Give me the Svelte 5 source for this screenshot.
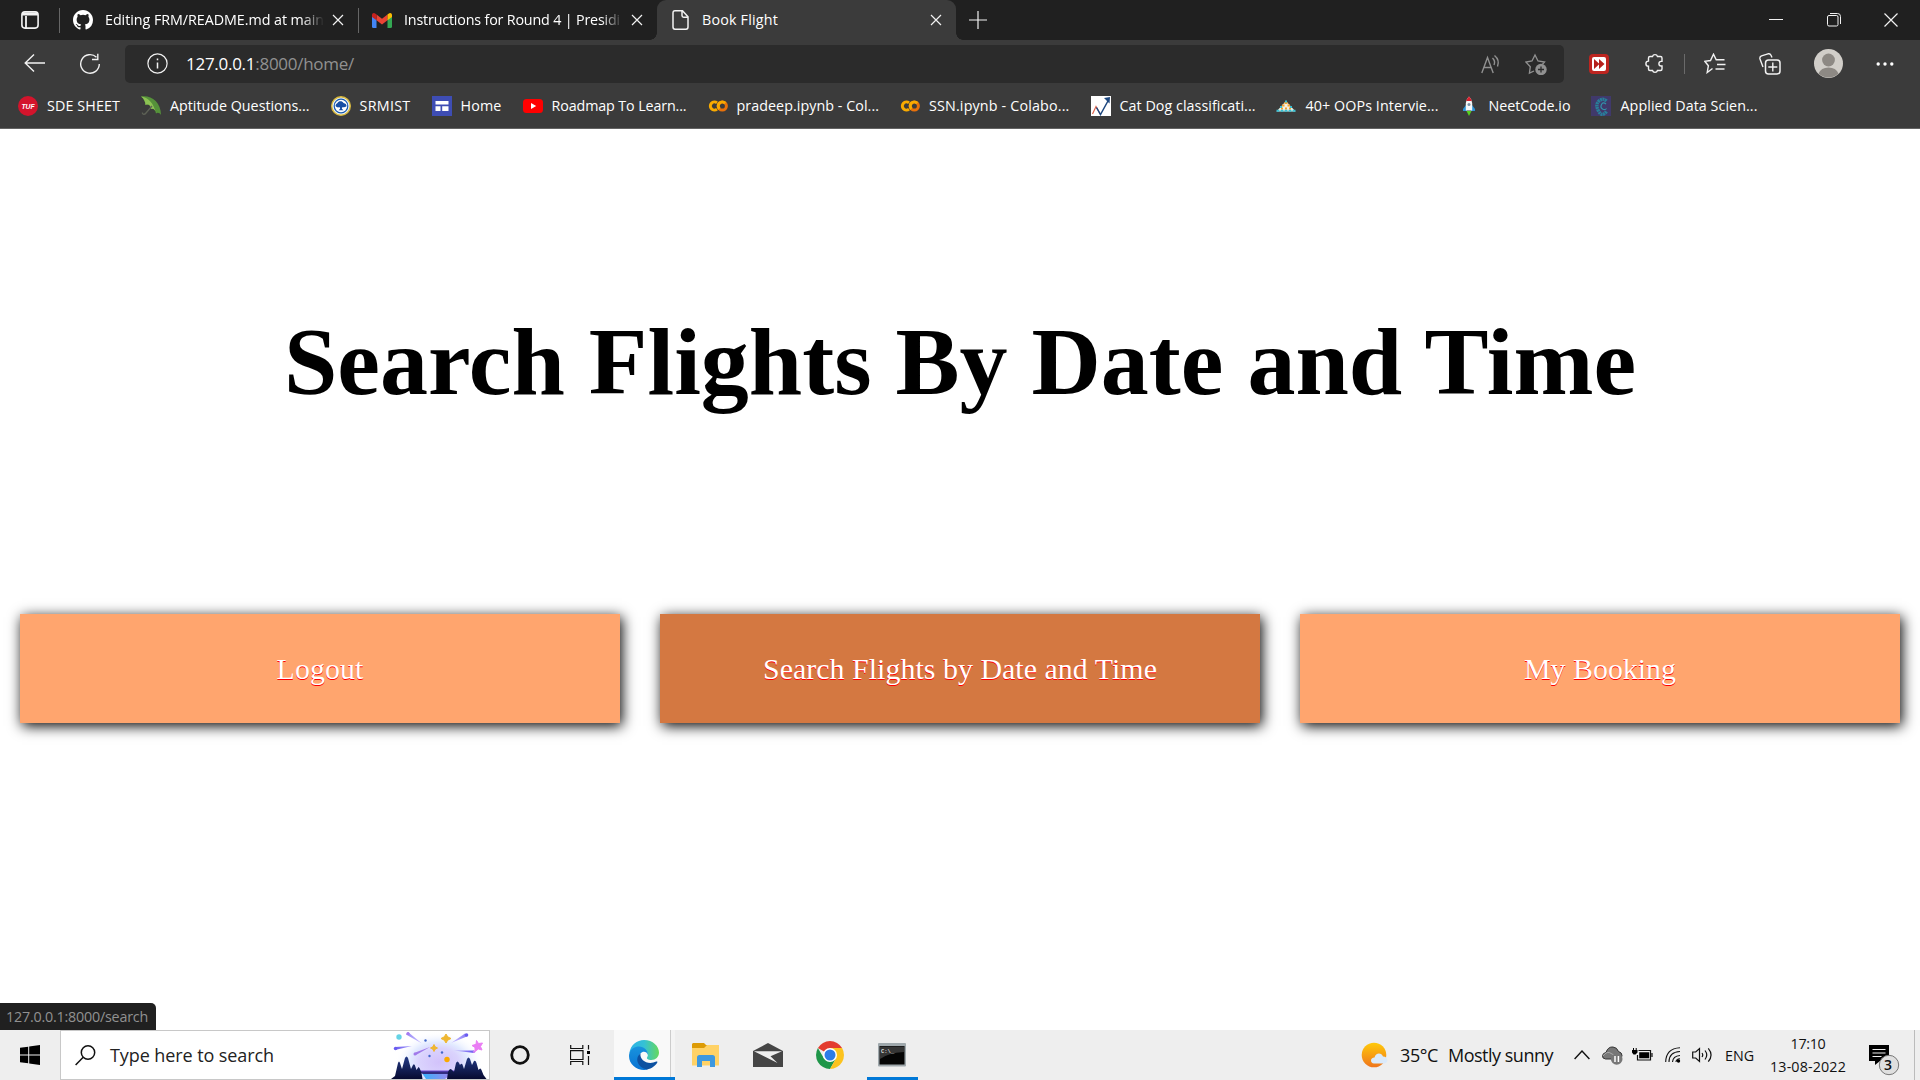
<script>
  // Spreads the letters of a label so that it fills the given width.
  function fit(node, width) {
    const natural = node.getBoundingClientRect().width;
    node.style.letterSpacing = (width - natural) / node.textContent.length + 'px';
  }

  const bookmarks = [
    { icon: 'tuf', label: 'SDE SHEET', width: 73 },
    { icon: 'umbrella', label: 'Aptitude Questions...', width: 139.5 },
    { icon: 'srm', label: 'SRMIST', width: 51 },
    { icon: 'home', label: 'Home', width: 41 },
    { icon: 'youtube', label: 'Roadmap To Learn...', width: 135 },
    { icon: 'colab', label: 'pradeep.ipynb - Col...', width: 142.5 },
    { icon: 'colab', label: 'SSN.ipynb - Colabo...', width: 140.5 },
    { icon: 'chart', label: 'Cat Dog classificati...', width: 136 },
    { icon: 'pyramid', label: '40+ OOPs Intervie...', width: 133 },
    { icon: 'rocket', label: 'NeetCode.io', width: 82 },
    { icon: 'swirl', label: 'Applied Data Scien...', width: 137 }
  ];

  const actions = [
    { label: 'Logout', width: 87 },
    { label: 'Search Flights by Date and Time', width: 394, hover: true },
    { label: 'My Booking', width: 152 }
  ];
</script>

{#snippet cross()}
  <svg class="line" width="12" height="12" viewBox="0 0 12 12"><path d="M1 1l10 10M11 1L1 11" /></svg>
{/snippet}

{#snippet mark(name)}
  <svg width="20" height="20" viewBox="0 0 20 20">
    {#if name === 'tuf'}
      <circle cx="10" cy="10" r="10" fill="#d3142c" />
      <text x="10" y="12.6" class="tuf" text-anchor="middle">TUF</text>
    {:else if name === 'umbrella'}
      <path d="M0 .5C9-1.500 20 5 20 19c-1.500-2.500-3.500-3-5-1.500-.5-3.500-2.500-5.500-5-4.500 0-3.500-2.500-5.500-5.500-4C4.500 6 3 2.500 0 .5z" fill="#55913a" />
      <path d="M0 .5c7 .5 13 7 15 17-.5-3.500-2.500-5.500-5-4.500 0-3.500-2.500-5.500-5.500-4C4.500 6 3 2.500 0 .5z" fill="#8cc253" />
      <path d="M11 10L5 17c-1.500 2-4 1.500-3.500-.5" fill="none" stroke="#5d6155" stroke-width="1.300" />
    {:else if name === 'srm'}
      <circle cx="10" cy="10" r="9.300" fill="#e8eef2" stroke="#d9b93b" stroke-width="1.400" />
      <circle cx="10" cy="10" r="6.800" fill="#fff" stroke="#185ab0" stroke-width="1.200" />
      <path d="M4.500 10c0-2 1.300-2.400 2-3 1-2.500 5-2.500 6 0 2 .3 3 1.500 3 3.200-1.500 1.300-3 1.300-4 .8l-.7 1.800 1.700 1.500h-5l1.700-1.500-.7-1.800c-1.500.8-3 .3-4-1z" fill="#174fa5" />
    {:else if name === 'home'}
      <path d="M0 0h20v20H0z" fill="#3e4db4" />
      <path d="M3.500 5h13v3.500h-13zM3.500 10.200h5V15h-5zM10.200 10.200h6.300V15h-6.300z" fill="#fff" />
    {:else if name === 'youtube'}
      <rect y="3" width="20" height="14" rx="3.500" fill="#f00" />
      <path d="M8 7l5.200 3L8 13z" fill="#fff" />
    {:else if name === 'colab'}
      <circle cx="14.300" cy="10" r="4.100" fill="none" stroke="#e8710a" stroke-width="3" />
      <path d="M9 13.200a4.100 4.100 0 1 1 0-6.400" fill="none" stroke="#f9ab00" stroke-width="3" />
      <path d="M11.400 12.900a4.100 4.100 0 0 1 5.800-5.800" fill="none" stroke="#f9ab00" stroke-width="3" />
    {:else if name === 'chart'}
      <path d="M0 0h20v20H0z" fill="#fff" />
      <path d="M1.500 18L5 10.500l4.500 8" fill="none" stroke="#e0664e" stroke-width="1.200" />
      <path d="M5.500 11.500l4 7L17.500 4" fill="none" stroke="#1d477f" stroke-width="1.500" />
      <path d="M13 2l6-1-.5 6.500z" fill="#1d477f" />
    {:else if name === 'pyramid'}
      <path d="M10 5l9.500 10.500H.5z" fill="#f3f0e3" />
      <path d="M8.500 7h3M6 9.500h2.500m3 0h2.500M5 12.500h2m2 0h2m2 0h2" stroke="#f0a330" stroke-width="1.800" />
      <path d="M9 5.500h2M4 11h2m8 0h2M.5 14.800h3m1 0h3m1 0h3m1 0h3m1 0h3" stroke="#39bfd2" stroke-width="2" />
    {:else if name === 'rocket'}
      <path d="M7 9L4 13v2h4zM13 9l3 4v2h-4z" fill="#2b93d5" />
      <path d="M6.800 14.500V7Q7 3 10 .5 13 3 13.200 7v7.500z" fill="#f5f7f7" />
      <path d="M7.200 5Q8 2 10 .5 12 2 12.800 5z" fill="#d9202e" />
      <circle cx="10" cy="8.500" r="1.500" fill="#7792a8" />
      <path d="M7.500 15h5L10 20z" fill="#54d21e" />
    {:else}
      <path d="M0 0h20v20H0z" fill="#40396b" />
      <path d="M15.500 5Q12 1.500 8 5T7.500 15t8 .5" fill="none" stroke="#287f9a" stroke-width="3.400" stroke-dasharray="2 .5" />
      <path d="M15 8Q12 5.500 10.500 8.500t1 4.500 4-.5" fill="none" stroke="#3292a9" stroke-width="1.200" />
    {/if}
  </svg>
{/snippet}

<div class="screen">
  <header>
    <div class="strip">
      <div class="cell">
        <svg class="line" width="18" height="18" viewBox="0 0 18 18"><rect x=".9" y=".9" width="16.200" height="16.200" rx="3" stroke-width="1.600" /><path d="M1 3.500h16M1.500 2.500h15M5 5v12" stroke-width="1.800" /></svg>
      </div>
      <div class="tab">
        <svg width="20" height="20" viewBox="0 0 16 16" fill="#fff"><path d="M8 0C3.580 0 0 3.580 0 8c0 3.540 2.290 6.530 5.470 7.590.4.070.55-.17.55-.38 0-.19-.01-.82-.01-1.490-2.010.37-2.530-.49-2.690-.94-.09-.23-.48-.94-.82-1.130-.28-.15-.68-.52-.01-.53.63-.01 1.080.58 1.230.82.72 1.210 1.870.87 2.330.66.070-.52.280-.87.510-1.070-1.780-.2-3.640-.89-3.640-3.950 0-.87.31-1.590.82-2.150-.08-.2-.36-1.020.08-2.120 0 0 .67-.21 2.200.82a7.600 7.600 0 0 1 4 0c1.530-1.040 2.200-.82 2.200-.82.44 1.100.16 1.920.08 2.120.51.56.82 1.270.82 2.150 0 3.070-1.870 3.750-3.650 3.950.29.25.54.73.54 1.480 0 1.070-.01 1.930-.01 2.200 0 .21.15.46.55.38A8 8 0 0 0 16 8c0-4.420-3.580-8-8-8z" /></svg>
        <span class="title faded"><span class="fit" use:fit={219}>Editing FRM/README.md at main</span></span>
        {@render cross()}
      </div>
      <div class="tab">
        <svg width="20" height="15" viewBox="0 0 20 15"><path d="M0 2v11.500Q0 15 1.400 15H4.500V6z" fill="#4285f4" /><path d="M20 2v11.500q0 1.500-1.400 1.500h-3.100V6z" fill="#34a853" /><path d="M4.500 1.500V7.300L10 11.500l5.500-4.200V1.500L10 5.700z" fill="#ea4335" /><path d="M0 2C0 0 2-.6 3.500.7l1 .8v5.800L0 4z" fill="#c5221f" /><path d="M20 2c0-2-2-2.600-3.500-1.300l-1 .8v5.800L20 4z" fill="#fbbc04" /></svg>
        <span class="title faded"><span class="fit" use:fit={216}>Instructions for Round 4 | Presidi</span></span>
        {@render cross()}
      </div>
      <div class="tab active">
        <svg class="line doc" width="17" height="20" viewBox="0 0 17 20"><path d="M3 .8h7.500l5.500 6V17q0 2.200-2 2.200H3Q1 19.200 1 17V3Q1 .8 3 .8zM10 1v4.500q0 1.700 1.600 1.700H16" stroke-width="1.500" /></svg>
        <span class="title"><span class="fit" use:fit={76}>Book Flight</span></span>
        {@render cross()}
      </div>
      <div class="cell plus"><svg class="line" width="18" height="18" viewBox="0 0 18 18"><path d="M9 0v18M0 9h18" /></svg></div>
      <div class="window">
        <div class="cell"><svg class="line" width="14" height="14" viewBox="0 0 14 14"><path d="M0 6.500h14" stroke-width="1" /></svg></div>
        <div class="cell"><svg class="line" width="14" height="14" viewBox="0 0 14 14"><rect x=".5" y="2.500" width="10.500" height="10.500" rx="1.500" stroke-width="1" /><path d="M3 .5h7.500q3 0 3 3V11" stroke-width="1" /></svg></div>
        <div class="cell"><svg class="line" width="14" height="14" viewBox="0 0 14 14"><path d="M.5.5l13 13m0-13l-13 13" /></svg></div>
      </div>
    </div>

    <div class="toolbar">
      <svg class="line back" width="22" height="18" viewBox="0 0 22 18"><path d="M10 .5L1.200 9l8.800 8.500M1.500 9H21" stroke-width="1.400" /></svg>
      <svg class="line reload" width="22" height="22" viewBox="0 0 22 22"><path d="M17.500 4.300A9.300 9.300 0 1 0 20.300 11M18.800.8v5.700H13" stroke-width="1.400" /></svg>
      <div class="address">
        <svg class="line" width="21" height="21" viewBox="0 0 21 21"><circle cx="10.500" cy="10.500" r="9.600" /><path d="M10.500 9.500v6M10.500 5.500v1.800" stroke-width="1.500" /></svg>
        <span class="url fit" use:fit={168}><b>127.0.0.1</b>:8000/home/</span>
        <svg class="line dim" width="20" height="20" viewBox="0 0 20 20"><path d="M.8 19L6.500 3.500 12.200 19M2.800 13.500h7.500M11.500 4q3.200 3 1.500 7M13.500 1.500q5.500 4.500 3 11" stroke-width="1.400" /></svg>
        <svg class="line dim" width="23" height="22" viewBox="0 0 23 22"><path d="M9 18l-4.600 2.200.9-6.500L.8 9l6.200-1L10 2l3 6 6.500 1-2 2.200" stroke-width="1.300" /><circle cx="16" cy="16.500" r="5.700" fill="#919191" stroke="none" /><path d="M16 13.500v6M13 16.500h6" stroke="#2b2b2b" stroke-width="1.300" /></svg>
      </div>
      <div class="tools">
        <svg width="20" height="20" viewBox="0 0 20 20"><rect width="20" height="20" rx="4" fill="#bd2520" /><rect x="3" y="3" width="14" height="14" rx="2" fill="#fff" /><path d="M5 5l5.500 5L5 15zM10 5l5.500 5-5.500 5z" fill="#b51f1b" /></svg>
        <svg class="line" width="20" height="21" viewBox="0 0 20 21"><path d="M6 3.500h2.500a2.600 2.600 0 0 1 5 0h3q1.500 0 1.500 1.500v3.400h-.8a2.200 2.200 0 0 0 0 4.600h.8v3q0 1.500-1.500 1.500h-3a2.600 2.600 0 0 1-5 0H6Q4.500 17.500 4.500 16v-2.700a2.600 2.600 0 0 1 0-5.200V5q0-1.500 1.500-1.500z" stroke-width="1.400" /></svg>
        <i></i>
        <svg class="line" width="22" height="21" viewBox="0 0 22 21"><path d="M8.500 15.500l-5.300 4 1.200-6.800L.8 8.300l5.700-.8L9.500 1.200l2.700 5.500H20.500M13 11.500h8.500M11.500 16H20.500" stroke-width="1.400" /></svg>
        <svg class="line" width="22" height="22" viewBox="0 0 22 22"><path d="M4 14L1 6q-.6-2.400 1.500-3.200L9 .8q2-.5 3 1.500L13 4.500" stroke-width="1.400" /><rect x="6.500" y="7" width="14.500" height="14" rx="3" stroke-width="1.500" /><path d="M13.800 9.500v9M9.300 14h9" stroke-width="1.400" /></svg>
        <svg width="29" height="29" viewBox="0 0 29 29"><circle cx="14.500" cy="14.500" r="14.500" fill="#d1cec9" /><circle cx="14.500" cy="11" r="6.400" fill="#8d8984" /><path d="M4.500 24.500q2.500-6 10-6t10 6a14.500 14.500 0 0 1-20 0z" fill="#8d8984" /></svg>
        <svg width="18" height="4" viewBox="0 0 18 4" fill="#fff"><circle cx="2.200" cy="2" r="1.700" /><circle cx="9" cy="2" r="1.700" /><circle cx="15.800" cy="2" r="1.700" /></svg>
      </div>
    </div>

    <nav>
      {#each bookmarks as item}
        <span class="bookmark">{@render mark(item.icon)}<span class="fit" use:fit={item.width}>{item.label}</span></span>
      {/each}
    </nav>
  </header>

  <main>
    <h1><span class="fit" use:fit={1352}>Search Flights By Date and Time</span></h1>
    <div class="actions">
      {#each actions as item}
        <a class:hover={item.hover}><span class="fit" use:fit={item.width}>{item.label}</span></a>
      {/each}
    </div>
    <div class="status"><span class="fit" use:fit={142}>127.0.0.1:8000/search</span></div>
  </main>

  <footer>
    <div class="cell start"><svg width="20" height="20" viewBox="0 0 20 20"><path d="M0 2.800L8.200 1.700v7.800H0zM9.200 1.500L20 0v9.500H9.200zM0 10.500h8.200v7.800L0 17.200zM9.200 10.500H20V20L9.200 18.500z" /></svg></div>
    <div class="search">
      <svg class="ink" width="21" height="21" viewBox="0 0 21 21"><circle cx="13" cy="7.500" r="6.700" stroke-width="1.500" /><path d="M8.200 12.300L.6 20" stroke-width="1.500" /></svg>
      <span class="fit" use:fit={164}>Type here to search</span>
      <svg class="scene" width="98" height="48" viewBox="0 0 98 48">
        <defs>
          <radialGradient id="glow" cx=".5" cy=".6" r=".5"><stop offset="0" stop-color="#d2c2fb" /><stop offset=".45" stop-color="#dad3fd" /><stop offset=".65" stop-color="#e2eaff" /><stop offset="1" stop-color="#fff" stop-opacity="0" /></radialGradient>
          <linearGradient id="lake"><stop offset="0" stop-color="#35b2fa" /><stop offset="1" stop-color="#a783f0" /></linearGradient>
          <linearGradient id="tree" x2="0" y2="1"><stop offset="0" stop-color="#233a86" /><stop offset="1" stop-color="#070a30" /></linearGradient>
          <linearGradient id="rayLeft"><stop offset="0" stop-color="#6a5cf0" /><stop offset="1" stop-color="#cfc4ff" /></linearGradient>
          <linearGradient id="rayRight"><stop offset="0" stop-color="#cfc4ff" /><stop offset="1" stop-color="#6558f0" /></linearGradient>
        </defs>
        <ellipse cx="48" cy="25" rx="44" ry="31" fill="url(#glow)" />
        <path d="M31 42h31l-8 6H35z" fill="url(#lake)" /><path d="M26 40h42l-6 3H32z" fill="#332d82" /><path d="M26 40h42" stroke="#6d4bd6" stroke-width="1" />
        <path d="M0 48l4-3 3-13q1-3 2 0l2 6 3-11q1.500-3 3 0l3 11 2-4q1.500-2 2.500 2l1 3 2-3q1 0 3 6l1 6zM56 48l1-7q2-5 4-2l2 2 2-9q1.500-3 3 0l1 2q2-3 3 1l1 3 3-10q1.500-3 3 0l2 6 2-4q1.500-1 2.500 2l2 7q2-3 3 0l2 5 3 4z" fill="url(#tree)" />
        <path d="M17 1l14 11.500-16-9zM4 16l17-1-17 4z" fill="url(#rayLeft)" /><path d="M60 12L74 2.500l3 2.500zM63 19.500l20 0v2.500z" fill="url(#rayRight)" /><path d="M23 22l16-6-14 8z" fill="#a17aea" /><circle cx="17" cy="2.500" r="1.600" fill="#a879ef" />
        <circle cx="75.500" cy="4" r="1.800" fill="#6a5cf0" /><circle cx="4.500" cy="17.500" r="1.700" fill="#6a5cf0" /><circle cx="24" cy="23" r="1.500" fill="#a17aea" /><circle cx="83" cy="20.800" r="1.300" fill="#c582f4" />
        <g fill="#efb732"><path d="M55 3l1.700 2.800L60 7.500l-3.300 1.700L55 12l-1.700-2.800L50 7.500l3.300-1.700zM43 13.500l1.200 2.300 2.300 1.200-2.300 1.200L43 20.500l-1.200-2.300-2.300-1.200 2.300-1.200z" stroke="#efb732" /></g>
        <circle cx="56" cy="28.500" r="2.700" fill="#faa900" />
        <path d="M85.500 9.500l2 3 4-.5-2 3.500 1.500 3.500-3.700-1-3.300 2.500v-4l-3-2 4-1.200z" fill="#ea7df4" stroke="#ea7df4" />
        <circle cx="8" cy="6" r="2.700" fill="#65d4e6" /><g fill="#4268cb"><circle cx="34.500" cy="9.500" r="1.200" /><circle cx="51" cy="21.500" r="1.200" /><circle cx="38.500" cy="25" r="1.200" /></g>
      </svg>
    </div>
    <div class="cell app"><svg class="ink" width="20" height="20" viewBox="0 0 20 20"><circle cx="10" cy="10" r="8.300" stroke-width="2.800" /></svg></div>
    <div class="cell app"><svg class="ink" width="20" height="20" viewBox="0 0 20 20"><path d="M.7 0v3.500h12.100V0M.7 20v-3.500h12.100V20M.5 5.700h12.500v8.800H.5zM18.500 0v4.500M18.500 11v9" stroke-width="1.200" /><path d="M17 6h3v3h-3z" fill="#000" stroke="none" /></svg></div>
    <div class="cell edge">
      <svg width="30" height="30" viewBox="0 0 30 30">
        <defs><linearGradient id="ea" x1="0" x2="1"><stop offset="0" stop-color="#2bb1e8" /><stop offset=".5" stop-color="#35c1d5" /><stop offset="1" stop-color="#66d95c" /></linearGradient><linearGradient id="eb" x2="0" y2="1"><stop offset="0" stop-color="#1993dd" /><stop offset="1" stop-color="#0873d3" /></linearGradient></defs>
        <path d="M.4 13C1.500 5 8 0 15 0c9 0 15 6.200 15 12.500 0 4.500-3.400 7.500-7.600 7.500-3.500 0-5.200-1.500-4.200-2.700 2-3-.3-7.300-4.700-7.300C8 10 2.500 9 .4 13z" fill="url(#ea)" />
        <path d="M.2 14C1.500 8.500 6 6.500 10 6.500c5 0 9 3.700 9 8.500-1-3.300-5-4.500-7.500-1.500-4 5 0 14 7.500 15.900C9 32-1.500 24 .2 14z" fill="url(#eb)" />
        <path d="M11.500 13.500C5 18 9 28 18 29.500c5-.8 8.500-4 10.300-7 .4-.8-.3-1.300-1-.9C19 25.500 10.500 20.500 11.500 13.500z" fill="#0d51a1" />
      </svg>
    </div>
    <div class="cell app wide"><svg width="28" height="24" viewBox="0 0 28 24"><path d="M1 0h11l2 2h12.500v5H0V1z" fill="#dd9b05" /><path d="M0 5h12l3-3h12v20.500H0z" fill="#ffd266" /><path d="M5 24V14.500Q5 12 7.500 12h13q2.500 0 2.500 2.500V24h-5v-6h-8v6z" fill="#3d98df" /></svg></div>
    <div class="cell app wide"><svg width="30" height="24" viewBox="0 0 30 24"><path d="M0 8L15 0l15 8v16H0z" fill="#454545" /><path d="M1 8.200h28l-11.500 5L24.500 20z" fill="#eee" /></svg></div>
    <div class="cell app wide"><svg width="28" height="28" viewBox="0 0 28 28"><path d="M14 14L1.900 7A14 14 0 0 1 26.100 7z" fill="#e33b2e" /><path d="M1.900 7A14 14 0 0 0 14 28l6-10.500H8z" fill="#1f9649" /><path d="M14 7h12.100A14 14 0 0 1 14 28l6-10.500z" fill="#fcc31e" /><circle cx="14" cy="14" r="7" fill="#fff" /><circle cx="14" cy="14" r="5.500" fill="#2c7ce9" /></svg></div>
    <div class="cell app wide terminal"><svg width="29" height="24" viewBox="0 0 29 24"><rect width="28" height="23.500" rx="1" fill="#9fa8ac" /><path d="M1.500 3h25v18.500h-25z" fill="#050505" /><path d="M2 3.500h24V9Q10 10 2 16z" fill="#353535" /><text x="3" y="9.500" class="prompt">C:\_</text></svg></div>

    <div class="tray">
      <svg width="28" height="28" viewBox="0 0 28 28"><defs><linearGradient id="sun" x2="0" y2="1"><stop offset="0" stop-color="#ffca0a" /><stop offset="1" stop-color="#ef751d" /></linearGradient></defs><circle cx="13" cy="14" r="12.300" fill="url(#sun)" /><path d="M13 22.500q-3-.3-3-3t3.500-3c1-5 7-5.500 8.500-1 5-.3 6 6.500 1.500 7z" fill="#dbeafa" /></svg>
      <span class="fit temp" use:fit={38}>35°C</span>
      <span class="fit sky" use:fit={105}>Mostly sunny</span>
      <svg class="ink chev" width="16" height="10" viewBox="0 0 16 10"><path d="M.6 9L8 1l7.400 8" stroke-width="1.400" /></svg>
      <svg class="cloud" width="21" height="19" viewBox="0 0 21 19"><path d="M3.500 13Q0 12.500.5 9.500 1 7 4 6.500 6 .5 11 1q4 .3 5.500 4.500 3.500 1 3.500 4t-3 3.500z" fill="#777" stroke="#333" /><path d="M1 10q4-6 9-2l8 4" fill="none" stroke="#aaa" /><circle cx="14.700" cy="13" r="5.800" fill="#777" /><path d="M13 10v6m3.400-6v6" stroke="#fff" stroke-width="1.500" /></svg>
      <svg class="ink batt" width="21" height="14" viewBox="0 0 21 14"><path d="M6.500 2.500h12v9.500H5.500V7M20 5v4" stroke-width="1.200" /><path d="M7.200 4.200h10v6h-10zM0 2h5.500v2.500L3.500 6.500h-2L0 4.500zM1 0h1v2H1zM3.700 0h1v2h-1z" fill="#000" stroke="none" /></svg>
      <svg class="ink wifi" width="16" height="16" viewBox="0 0 16 16"><path d="M.7 15Q1 1.500 15 .8M4 15Q4 5 15 4.500M7.500 15Q8 9 15 8.500M11 15q0-3 4-3.300" stroke-width="1.100" /><circle cx="13.500" cy="14" r="1.700" fill="#000" stroke="none" /></svg>
      <svg class="ink vol" width="21" height="16" viewBox="0 0 21 16"><path d="M.7 5h3L7.500 1.500v13L3.700 11h-3zM10 6q1.500 2 0 4M13 3.500q3.500 4.500 0 9M16.300 1.300q5.500 6.700 0 13.400" stroke-width="1.200" /></svg>
      <span class="fit small lang" use:fit={29}>ENG</span>
      <div class="clock small"><span class="fit" use:fit={35}>17:10</span><span class="fit" use:fit={76}>13-08-2022</span></div>
      <div class="notes">
        <svg width="31" height="31" viewBox="0 0 31 31"><path d="M0 0h20v16H11l-5 4v-4H0z" /><path d="M3.500 4.500h13M3.500 8h13M3.500 11.500h9" stroke="#eee" stroke-width="1.200" /><circle cx="20" cy="20" r="9.700" fill="#dfdfdf" stroke="#777" /></svg>
        <span class="count">3</span>
      </div>
    </div>
  </footer>
</div>

<style>
  :global(body) { margin: 0; overflow: hidden; }
  .screen { width: 1920px; height: 1080px; display: flex; flex-direction: column; background: #fff; font-family: 'Open Sans', sans-serif; font-size: 14.300px; }
  svg { display: block; flex: none; }
  .line { fill: none; stroke: #f2f2f2; stroke-width: 1.200; }
  .ink { fill: none; stroke: #111; }
  .dim { stroke: #919191; }
  .fit { display: inline-block; white-space: nowrap; }
  .cell { display: flex; align-items: center; justify-content: center; }

  header { height: 129px; box-sizing: border-box; border-bottom: 1px solid #636363; background: #3b3b3b; color: #fff; }
  .strip { height: 40px; display: flex; background: #202020; }
  .strip > .cell { width: 59px; }
  .tab { position: relative; width: 299px; box-sizing: border-box; padding: 0 14px 0 14px; display: flex; align-items: center; }
  .tab:not(.active)::before { content: ''; position: absolute; left: 0; top: 8px; width: 1px; height: 25px; background: #666; }
  .tab.active { background: #3b3b3b; border-radius: 9px 9px 0 0; }
  .tab.active::before, .tab.active::after { content: ''; position: absolute; bottom: 0; width: 7px; height: 7px; }
  .tab.active::before { left: -7px; background: radial-gradient(circle at 0 0, #202020 6.500px, #3b3b3b 7px); }
  .tab.active::after { right: -7px; background: radial-gradient(circle at 100% 0, #202020 6.500px, #3b3b3b 7px); }
  .title { flex: 1; min-width: 0; margin-left: 12px; margin-right: 8px; padding-bottom: 2px; white-space: nowrap; }
  .faded { mask-image: linear-gradient(90deg, #000 90%, transparent 100%); }
  .doc { margin-left: 1px; margin-right: 1px; }
  .strip > .plus { width: 44px; padding-bottom: 1px; box-sizing: border-box; }
  .window { margin-left: auto; display: flex; }
  .window .cell { width: 57.500px; }

  .toolbar { height: 48px; padding-top: 5px; box-sizing: border-box; display: flex; align-items: flex-start; }
  .back { margin: 9px 0 0 24px; }
  .reload { margin: 8px 0 0 33px; }
  .address { width: 1439px; height: 38px; margin-left: 24px; padding: 0 16px 1px 22px; box-sizing: border-box; display: flex; align-items: center; border-radius: 5px; background: #2b2b2b; }
  .url { margin-left: 18px; margin-right: auto; padding-bottom: 1px; color: #919191; font-size: 17px; }
  .url b { color: #fff; font-weight: 400; }
  .address .dim + .dim { margin-left: 24px; }
  .tools { height: 37px; margin-left: 7px; display: grid; grid-template-columns: 56px 54px 6px 56px 54px 62px 52px; align-items: center; justify-items: center; }
  .tools i { width: 1px; height: 20px; background: #6a6a6a; }
  nav { height: 35px; padding-left: 18px; display: flex; align-items: center; gap: 21px; }
  .bookmark { display: flex; align-items: center; gap: 9px; }
  .bookmark .fit { padding-bottom: 1px; }
  .tuf { fill: #fff; font: italic 700 6.800px 'Liberation Sans', sans-serif; }

  main { position: relative; flex: 1; color: #000; font-family: 'Liberation Serif', serif; }
  h1 { margin: 178px 0 0; height: 110px; line-height: 110px; text-align: center; font-size: 96px; }
  .actions { margin-top: 197px; padding: 0 20px; display: grid; grid-template-columns: repeat(3, 1fr); gap: 40px; }
  .actions a { height: 109px; display: flex; align-items: center; justify-content: center; background: #ffa56e; color: #fff; font-size: 30px; text-shadow: 0 1px 0 #f00; box-shadow: 2px 3px 13px #000; }
  .actions a.hover { background: #d47841; }
  .status { position: absolute; left: 0; bottom: 0; width: 156px; height: 27px; box-sizing: border-box; padding-left: 6px; border-radius: 0 5px 0 0; background: #202020; color: #919191; font: 14.300px/27px 'Open Sans', sans-serif; }

  footer { height: 50px; display: flex; background: #eee; color: #111; }
  .start { width: 60px; }
  .search { width: 430px; height: 50px; box-sizing: border-box; border: 1px solid #c8c8c8; background: #fff; display: flex; align-items: center; padding-left: 14px; font-size: 18px; }
  .search .fit { margin-left: 14px; color: #222; }
  .scene { margin-left: auto; }
  .app { width: 60px; }
  .edge { width: 61px; margin-left: 4px; box-sizing: border-box; padding-right: 1px; background: linear-gradient(90deg, #f9f9f9 56px, #ccc 56px 57px, #f4f4f4 57px); box-shadow: inset 0 -3px #0078d7; }
  .wide { width: 62px; }
  .terminal { background: linear-gradient(#0078d7, #0078d7) 6px 47px / 51px 3px no-repeat; }
  .prompt { fill: #ddd; font: 700 5.500px 'Liberation Mono', monospace; }
  .tray { flex: 1; margin-left: 438px; display: flex; align-items: center; font-size: 18px; border-right: 1px solid #bbb; margin-right: 5px; }
  .temp { margin-left: 11px; }
  .sky { margin-left: 10px; }
  .chev { margin-left: 21px; }
  .cloud { margin-left: 12px; }
  .batt { margin-left: 9px; }
  .wifi { margin-left: 12px; }
  .vol { margin-left: 11px; }
  .lang { margin-left: 12px; }
  .small { font-size: 14.300px; }
  .clock { width: 76px; margin-left: 16px; display: flex; flex-direction: column; align-items: center; line-height: 23px; }
  .notes { position: relative; margin: 11px 0 0 23px; }
  .count { position: absolute; left: 15px; top: 10px; font-size: 14px; font-weight: 600; line-height: 20px; }
</style>
